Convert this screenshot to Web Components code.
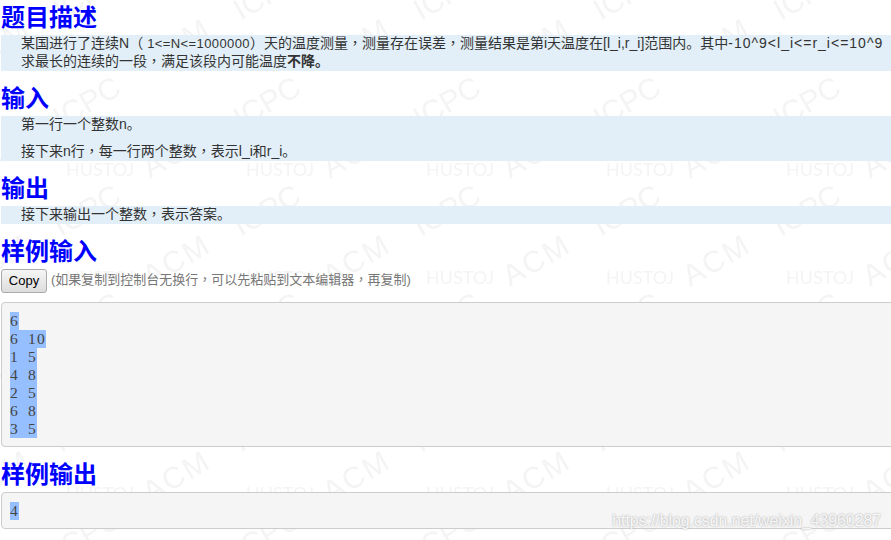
<!DOCTYPE html>
<html>
<head>
<meta charset="utf-8">
<style>
  html, body { margin: 0; padding: 0; background: #fff; }
  body {
    width: 891px;
    height: 540px;
    overflow: hidden;
    font-family: "Liberation Sans", "Noto Sans CJK SC", sans-serif;
  }
  /* these glyphs sit centred in their cell in the reference */
  .c { font-family: "Noto Sans CJK TC", sans-serif; line-height: 0; }
  .w { letter-spacing: 1px; }
</style>
</head>
<body>
<problem-page>
  <problem-section heading="题目描述">
    <p>某国进行了连续N<span class="c">（</span><small-num>1&lt;=N&lt;=1000000</small-num><span class="c">）</span>天的温度测量<span class="c">，</span>测量存在误差<span class="c">，</span>测量结果是第i天温度在[l_i,r_i]范围内。其中<span class="w">-10^9&lt;l_i&lt;=r_i&lt;=10^9</span></p>
    <p>求最长的连续的一段<span class="c">，</span>满足该段内可能温度<b>不降。</b></p>
  </problem-section>
  <problem-section heading="输入">
    <p>第一行一个整数n。</p>
    <p class="gap">接下来n行<span class="c">，</span>每一行两个整数<span class="c">，</span>表示l_i和r_i。</p>
  </problem-section>
  <problem-section heading="输出">
    <p>接下来输出一个整数<span class="c">，</span>表示答案。</p>
  </problem-section>
  <sample-block heading="样例输入" copy text="6
6 10
1 5
4 8
2 5
6 8
3 5"></sample-block>
  <sample-block heading="样例输出" text="4"></sample-block>
</problem-page>
<script>
  // the marks repeat every 180x108, ICPC gets its own pattern so nothing is clipped at the tile edge
  class WatermarkLayer extends HTMLElement {
    connectedCallback() {
      const root = this.attachShadow({ mode: 'open' });
      root.innerHTML = `
      <style>
        :host { position: absolute; inset: 0; display: block; pointer-events: none; }
        svg { display: block; width: 100%; height: 100%; }
        text { font-family: "Liberation Sans", sans-serif; fill: #f4f4f4; }
        .oj { font-family: Lato, sans-serif; }
      </style>
      <svg xmlns="http://www.w3.org/2000/svg" aria-hidden="true">
        <defs>
          <pattern id="marks" x="60" y="9" width="180" height="108" patternUnits="userSpaceOnUse">
            <text class="oj" x="6" y="59" font-size="18">HUSTOJ</text>
            <text transform="translate(90 62) rotate(-30)" font-size="30" letter-spacing="2">ACM</text>
          </pattern>
          <pattern id="icpc" x="45" y="72" width="180" height="108" patternUnits="userSpaceOnUse">
            <text transform="translate(16 57) rotate(-30)" font-size="30">ICPC</text>
          </pattern>
        </defs>
        <rect width="100%" height="100%" fill="url(#marks)"></rect>
        <rect width="100%" height="100%" fill="url(#icpc)"></rect>
      </svg>`;
    }
  }

  class ProblemPage extends HTMLElement {
    connectedCallback() {
      const root = this.attachShadow({ mode: 'open' });
      root.innerHTML = `
      <style>
        :host { display: block; position: relative; width: 891px; height: 540px; overflow: hidden; }
        .flow { position: relative; display: flex; flex-direction: column; padding-left: 1px; }
        .credit {
          position: absolute; right: 10px; bottom: 10px;
          font: 15.8px "Liberation Sans", sans-serif;
          color: rgba(255, 255, 255, 0.9);
          text-shadow: 0 0 2px #999;
        }
      </style>
      <watermark-layer></watermark-layer>
      <div class="flow"><slot></slot></div>
      <span class="credit">https://blog.csdn.net/weixin_43960287</span>`;
    }
  }

  class SectionTitle extends HTMLElement {
    connectedCallback() {
      const root = this.attachShadow({ mode: 'open' });
      root.innerHTML = `
      <style>
        :host {
          display: block; height: 35px; padding-top: 10px;
          font: 700 24px/35px "Liberation Sans", "Noto Sans CJK SC", sans-serif;
          color: #00f;
        }
        :host([first]) { padding-top: 0; }
      </style>
      <slot></slot>`;
    }
  }

  class ProblemSection extends HTMLElement {
    connectedCallback() {
      const root = this.attachShadow({ mode: 'open' });
      const first = !this.previousElementSibling;
      root.innerHTML = `
      <style>
        :host { display: block; }
        .body {
          background: #e2eff8;
          padding-left: 20px;
          font: 14px/16px "Liberation Sans", "Noto Sans CJK SC", sans-serif;
          color: #333;
          white-space: nowrap;
        }
      </style>
      <section-title ${first ? 'first' : ''}>${this.getAttribute('heading')}</section-title>
      <div class="body"><slot></slot></div>`;
      this.querySelectorAll('p').forEach((p) => {
        p.style.height = '18px'; // 16px line in an 18px row, text sits a pixel higher
        p.style.margin = p.classList.contains('gap') ? '9px 0 0' : '0';
      });
    }
  }

  class SmallNum extends HTMLElement {
    connectedCallback() {
      const root = this.attachShadow({ mode: 'open' });
      root.innerHTML = `
      <style>:host { display: inline; font-size: 13px; line-height: 0; letter-spacing: 0.4px; }</style>
      <slot></slot>`;
    }
  }

  class SampleBlock extends HTMLElement {
    connectedCallback() {
      const root = this.attachShadow({ mode: 'open' });
      const lines = (this.getAttribute('text') || '').split('\n');
      const copyRow = this.hasAttribute('copy')
        ? `<div class="row"><button type="button">Copy</button><span class="hint">(如果复制到控制台无换行<span class="c">，</span>可以先粘贴到文本编辑器<span class="c">，</span>再复制)</span></div>`
        : '';
      root.innerHTML = `
      <style>
        :host { display: block; }
        .row { display: flex; align-items: center; gap: 4px; height: 24px; margin-bottom: 9px; }
        button {
          width: 46px; height: 24px; padding: 0 0 1px; box-sizing: border-box;
          font: 13px "Liberation Sans", sans-serif; color: #000;
          background: linear-gradient(#f6f6f6, #dcdcdc);
          border: 1px solid #aaa; border-radius: 3px;
        }
        .hint { margin-bottom: 5px; font: 13px "Liberation Sans", "Noto Sans CJK SC", sans-serif; color: #777; }
        .c { font-family: "Noto Sans CJK TC", sans-serif; line-height: 0; }
        pre {
          margin: 0 -4px 0 0; padding: 9px 8px 8px;
          background: #f5f5f5; border: 1px solid #ccc; border-radius: 4px;
          font: 15.6px/18px "Liberation Serif", serif;
          color: #444;
        }
        .line { display: block; height: 18px; }
        /* reference font is monospace at 9px a cell, so pad the serif digits out to that */
        mark {
          display: inline-block; height: 18px; line-height: 18px;
          background: #96bfff; color: #444;
          letter-spacing: 1.2px; word-spacing: 3.9px;
        }
      </style>
      <section-title>${this.getAttribute('heading')}</section-title>
      ${copyRow}
      <pre>${lines.map((l) => `<span class="line"><mark>${l}</mark></span>`).join('')}</pre>`;
    }
  }

  customElements.define('watermark-layer', WatermarkLayer);
  customElements.define('section-title', SectionTitle);
  customElements.define('small-num', SmallNum);
  customElements.define('problem-section', ProblemSection);
  customElements.define('sample-block', SampleBlock);
  customElements.define('problem-page', ProblemPage);
</script>
</body>
</html>
